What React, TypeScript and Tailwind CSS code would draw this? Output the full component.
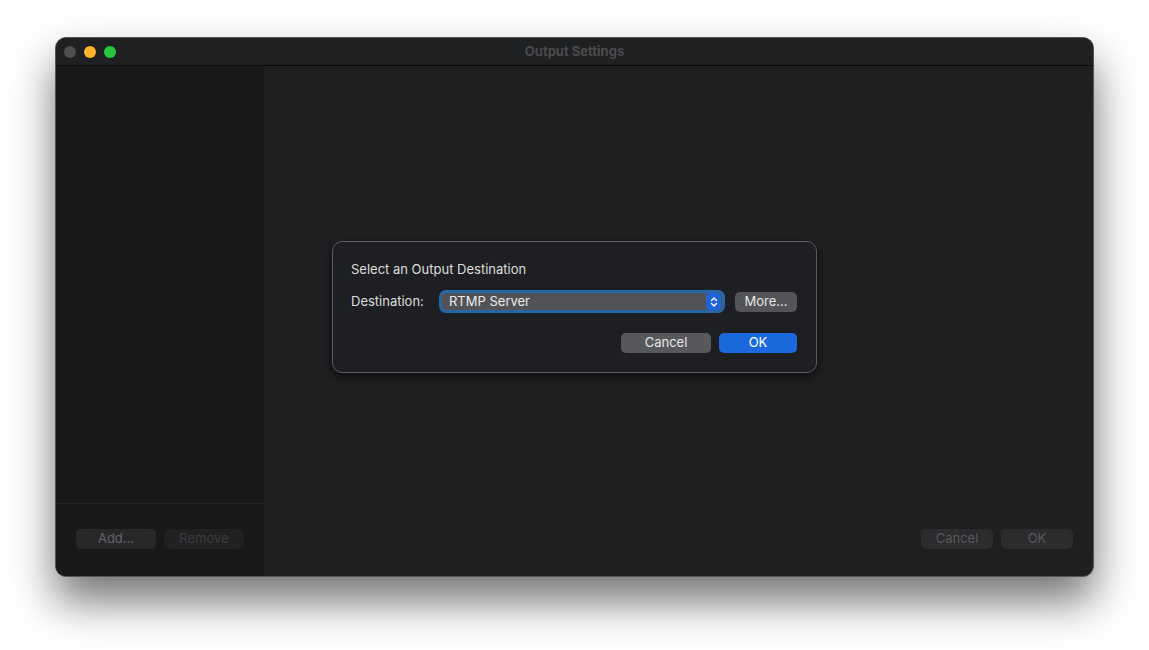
import React from 'react';

const font = { fontFamily: 'Inter, "Liberation Sans", sans-serif' };

const TrafficLights: React.FC = () => (
    <div className="flex items-center gap-[8px] pl-[8px]">
        <span className="w-[12px] h-[12px] rounded-full bg-[#4e4f51]" />
        <span className="w-[12px] h-[12px] rounded-full bg-[#fdb42c]" />
        <span className="w-[12px] h-[12px] rounded-full bg-[#28c53f]" />
    </div>
);

const App: React.FC = () => {
    return (
        <div className="w-[1149px] h-[650px] bg-white overflow-hidden pt-[37px] pl-[55px]" style={font}>
            <div className="relative w-[1039px] h-[540px] rounded-[11px] border border-[#555658] bg-[#1e1f21] overflow-hidden shadow-[0_24px_44px_rgba(0,0,0,0.55)] flex flex-col">
                {/* Title bar */}
                <div className="h-[28px] shrink-0 bg-[#1f2022] border-b border-[#0c0c0c] relative flex items-center">
                    <TrafficLights />
                    <div className="absolute inset-0 flex items-center justify-center text-[13px] font-bold text-[#4a4b4d]">
                        Output Settings
                    </div>
                </div>

                <div className="flex flex-1 min-h-0">
                    {/* Sidebar */}
                    <div className="w-[208px] shrink-0 bg-[#181818] flex flex-col">
                        <div className="flex-1 border-b border-[#262626]" />
                        <div className="h-[72px] flex items-start pt-[25px] pl-[20px] gap-[8px]">
                            <button className="w-[80px] h-[20px] rounded-[5px] bg-[#27282a] text-[13px] text-[#646567]">Add...</button>
                            <button className="w-[80px] h-[20px] rounded-[5px] bg-[#202122] text-[13px] text-[#3c3d3f]">Remove</button>
                        </div>
                    </div>

                    {/* Main */}
                    <div className="flex-1 flex flex-col">
                        <div className="flex-1" />
                        <div className="h-[72px] flex items-start justify-end pt-[25px] pr-[20px] gap-[8px]">
                            <button className="w-[72px] h-[20px] rounded-[5px] bg-[#2b2c2e] text-[13px] text-[#59595b]">Cancel</button>
                            <button className="w-[72px] h-[20px] rounded-[5px] bg-[#2b2c2e] text-[13px] text-[#59595b]">OK</button>
                        </div>
                    </div>
                </div>

                {/* Sheet dialog */}
                <div className="absolute inset-0 flex items-center justify-center">
                    <div className="w-[485px] h-[132px] rounded-[10px] border border-[#5b5c5f] bg-[#1e1f22] shadow-[0_4px_10px_rgba(0,0,0,0.6)] pl-[18px] pr-[19px] pt-[19px]">
                        <div className="text-[13px] text-[#dedede] leading-[16px]">Select an Output Destination</div>
                        <div className="flex items-center mt-[13px]">
                            <span className="w-[88px] text-[13px] text-[#dedede]">Destination:</span>
                            <div className="w-[286px] h-[23px] rounded-[7px] border-[3px] border-[#2866a5] bg-[#515356] flex items-center justify-between pl-[7px] pr-[1px]">
                                <span className="text-[13px] text-[#ececec]">RTMP Server</span>
                                <span className="w-[15px] h-[17px] rounded-[4px] bg-[#1f63d9] flex items-center justify-center">
                                    <svg width="8" height="12" viewBox="0 0 8 12" fill="none" stroke="white" strokeWidth="1.4" strokeLinecap="round" strokeLinejoin="round">
                                        <path d="M1.5 4.5 L4 2 L6.5 4.5" />
                                        <path d="M1.5 7.5 L4 10 L6.5 7.5" />
                                    </svg>
                                </span>
                            </div>
                            <button className="ml-[10px] w-[62px] h-[20px] rounded-[5px] bg-[#535457] text-[13px] text-[#e6e6e6]">More...</button>
                        </div>
                        <div className="flex justify-end gap-[8px] mt-[20px]">
                            <button className="w-[90px] h-[20px] rounded-[5px] bg-[#58595c] text-[13px] text-[#e6e6e6]">Cancel</button>
                            <button className="w-[78px] h-[20px] rounded-[5px] bg-[#1b69dc] text-[13px] text-white">OK</button>
                        </div>
                    </div>
                </div>
            </div>
        </div>
    );
};

export default App;
